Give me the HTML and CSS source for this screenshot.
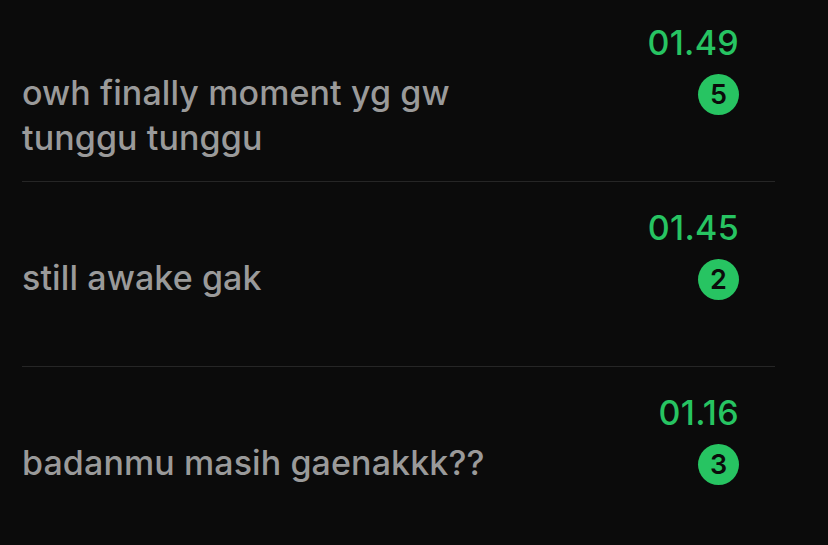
FILE: index.html
```html
<!DOCTYPE html>
<html lang="id">
<head>
<meta charset="utf-8">
<title>Chats</title>
<link rel="stylesheet" href="styles.css">
</head>
<body>
<ul class="chat-list">
  <li class="chat">
    <p class="message">owh finally moment yg gw tunggu tunggu</p>
    <div class="meta">
      <span class="time">01.49</span>
      <span class="badge">5</span>
    </div>
  </li>
  <li class="chat">
    <p class="message">still awake gak</p>
    <div class="meta">
      <span class="time">01.45</span>
      <span class="badge">2</span>
    </div>
  </li>
  <li class="chat">
    <p class="message">badanmu masih gaenakkk??</p>
    <div class="meta">
      <span class="time">01.16</span>
      <span class="badge">3</span>
    </div>
  </li>
</ul>
</body>
</html>
```
FILE: styles.css
```css
html, body {
  margin: 0;
  padding: 0;
  background: #0b0b0b;
  height: 100%;
  overflow: hidden;
}

body {
  font-family: Inter, "Liberation Sans", sans-serif;
}

.chat-list {
  list-style: none;
  margin: -3px 0 0 0;
  padding: 0;
}

.chat {
  display: flex;
  justify-content: space-between;
  align-items: flex-start;
  height: 184px;
  margin: 0 53px 0 22px;
  padding-right: 36px;
  border-bottom: 1px solid #262626;
}

.message {
  margin: 0;
  padding-top: 73px;
  width: 480px;
  font-size: 34px;
  line-height: 45px;
  font-weight: 500;
  color: #9a9a9a;
  letter-spacing: 0.1px;
}

.meta {
  display: flex;
  flex-direction: column;
  align-items: flex-end;
  padding-top: 26px;
}

.time {
  font-size: 34px;
  line-height: 40px;
  font-weight: 450;
  color: #27c462;
  letter-spacing: 0.3px;
}

.badge {
  margin-top: 11px;
  width: 41px;
  height: 41px;
  border-radius: 50%;
  background: #27c462;
  color: #0b0b0b;
  font-size: 27px;
  font-weight: 600;
  display: flex;
  align-items: center;
  justify-content: center;
}
```
